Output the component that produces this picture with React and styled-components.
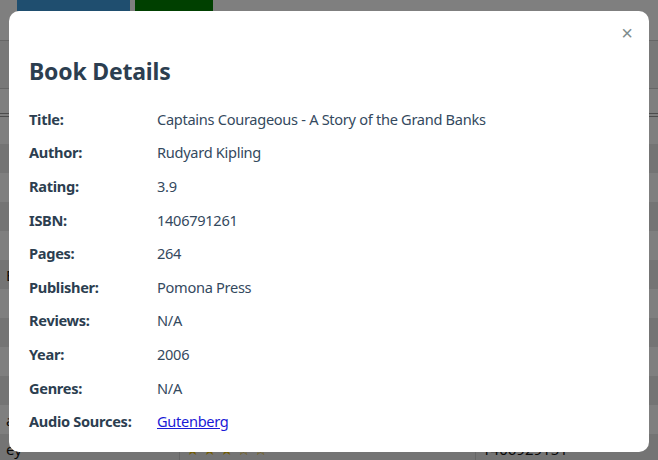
import React from 'react'
import styled, { createGlobalStyle } from 'styled-components'

const GlobalStyle = createGlobalStyle`
  html, body { margin: 0; padding: 0; }
  body {
    font-family: "Noto Sans", "Open Sans", Arial, sans-serif;
    background: #ffffff;
    width: 658px;
    height: 460px;
    overflow: hidden;
  }
`

const Page = styled.div`
  position: relative;
  width: 658px;
  height: 460px;
  overflow: hidden;
  background: #fff;
`

const Toolbar = styled.div`
  display: flex;
  gap: 5px;
  padding: 0 0 0 17px;
  height: 40px;
  align-items: flex-start;
`

const ToolButton = styled.button`
  width: ${p => p.w}px;
  height: 11px;
  border: none;
  padding: 0;
  background: ${p => p.bg};
`

const FilterBar = styled.div`
  height: 47px;
  background: #f0f0f0;
  border-top: 1px solid #ccc;
  border-bottom: 1px solid #ccc;
`

const Table = styled.table`
  width: 100%;
  border-collapse: collapse;
  table-layout: fixed;
  font-family: "Noto Sans", Arial, sans-serif;
  font-size: 15px;
  color: #222;
`

const HeadRow = styled.tr`
  height: 26px;
  border-bottom: 4px double #999;
`

const Row = styled.tr`
  height: 29px;
  background: ${p => (p.odd ? '#e8e8e8' : '#ffffff')};
`

const Cell = styled.td`
  padding: 0 6px;
  border-left: ${p => (p.divider ? '1px solid #ccc' : 'none')};
  width: ${p => p.w || 'auto'};
  white-space: nowrap;
  overflow: hidden;
  color: #111;
`

const Stars = styled.span`
  color: #e6b800;
  letter-spacing: 4px;
`

const Overlay = styled.div`
  position: absolute;
  inset: 0;
  background: rgba(0, 0, 0, 0.5);
  display: flex;
  justify-content: center;
  padding-top: 11px;
`

const Modal = styled.div`
  position: relative;
  box-sizing: border-box;
  width: 640px;
  height: 441px;
  background: #fff;
  border-radius: 10px;
  padding: 0 20px 20px 20px;
  color: #2c3e50;
`

const Close = styled.button`
  position: absolute;
  top: 14px;
  right: 16px;
  border: none;
  background: none;
  padding: 0;
  font-size: 20px;
  line-height: 16px;
  color: #7f8c8d;
  font-family: Arial, sans-serif;
  cursor: pointer;
`

const Title = styled.h2`
  margin: 0;
  padding-top: 45px;
  font-size: 23px;
  line-height: 30px;
  font-weight: 700;
  color: #2c3e50;
  letter-spacing: -0.2px;
`

const Details = styled.div`
  margin-top: 16px;
  display: grid;
  grid-template-columns: 128px 1fr;
  font-size: 14.6px;
  line-height: 22px;
  letter-spacing: -0.3px;
`

const Label = styled.div`
  font-weight: 700;
  padding: 5.8px 0;
  color: #2c3e50;
`

const Value = styled.div`
  padding: 5.8px 0;
  color: #34495e;
`

const Link = styled.a`
  color: #1a1ad6;
  text-decoration: underline;
`

const details = [
  ['Title:', 'Captains Courageous - A Story of the Grand Banks'],
  ['Author:', 'Rudyard Kipling'],
  ['Rating:', '3.9'],
  ['ISBN:', '1406791261'],
  ['Pages:', '264'],
  ['Publisher:', 'Pomona Press'],
  ['Reviews:', 'N/A'],
  ['Year:', '2006'],
  ['Genres:', 'N/A'],
]

const rows = ['', '', '', '', '', 'Bu', '', '', '', '', 'av', 'ey']

export default function App() {
  return (
    <Page>
      <GlobalStyle />
      <Toolbar>
        <ToolButton w={113} bg="#3e9cde" />
        <ToolButton w={78} bg="#008000" />
      </Toolbar>
      <FilterBar />
      <Table>
        <tbody>
          <HeadRow>
            <Cell w="167px" />
            <Cell divider w="283px" />
            <Cell divider />
          </HeadRow>
          {rows.map((t, i) => (
            <Row key={i} odd={i % 2 === 1}>
              <Cell>{t}</Cell>
              <Cell divider>{i === rows.length - 1 ? <Stars>★★★☆☆</Stars> : ''}</Cell>
              <Cell divider>{i === rows.length - 1 ? '1406929151' : ''}</Cell>
            </Row>
          ))}
        </tbody>
      </Table>
      <Overlay>
        <Modal>
          <Close aria-label="Close">×</Close>
          <Title>Book Details</Title>
          <Details>
            {details.map(([k, v]) => (
              <React.Fragment key={k}>
                <Label>{k}</Label>
                <Value>{v}</Value>
              </React.Fragment>
            ))}
            <Label>Audio Sources:</Label>
            <Value>
              <Link href="#">Gutenberg</Link>
            </Value>
          </Details>
        </Modal>
      </Overlay>
    </Page>
  )
}
